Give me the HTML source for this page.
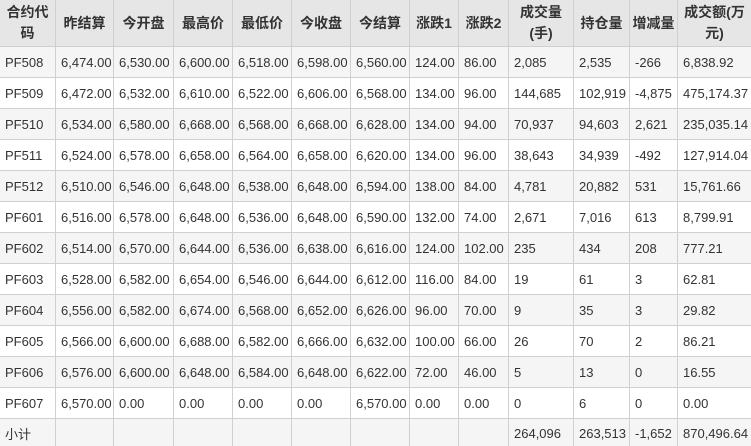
<!DOCTYPE html>
<html><head><meta charset="utf-8"><style>
html,body{margin:0;padding:0;background:#fff;width:751px;height:446px;overflow:hidden}
table{border-collapse:collapse;table-layout:fixed;width:752px;font-family:"Liberation Sans","Noto Sans CJK SC",sans-serif;font-size:13px;color:#333;margin-left:-1px;margin-top:-1px}
td,th{border:1px solid #d0d0d0;padding:0 0 0 5px;white-space:nowrap;overflow:hidden;box-sizing:border-box}
th{background:#e6e6e6;font-weight:bold;font-size:14px;height:47px;line-height:21px;text-align:center;white-space:normal;padding:0 2px}
td{height:31px}
tr:nth-child(even) td{background:#f5f5f5}
tr.last td{height:29px;background:#f5f5f5}
</style></head><body>
<table>
<colgroup><col style="width:56px"><col style="width:58px"><col style="width:60px"><col style="width:59px"><col style="width:59px"><col style="width:59px"><col style="width:59px"><col style="width:49px"><col style="width:50px"><col style="width:65px"><col style="width:56px"><col style="width:48px"><col style="width:74px"></colgroup>
<tr><th>合约代码</th><th>昨结算</th><th>今开盘</th><th>最高价</th><th>最低价</th><th>今收盘</th><th>今结算</th><th>涨跌1</th><th>涨跌2</th><th>成交量(手)</th><th>持仓量</th><th>增减量</th><th>成交额(万元)</th></tr>
<tr><td>PF508</td><td>6,474.00</td><td>6,530.00</td><td>6,600.00</td><td>6,518.00</td><td>6,598.00</td><td>6,560.00</td><td>124.00</td><td>86.00</td><td>2,085</td><td>2,535</td><td>-266</td><td>6,838.92</td></tr>
<tr><td>PF509</td><td>6,472.00</td><td>6,532.00</td><td>6,610.00</td><td>6,522.00</td><td>6,606.00</td><td>6,568.00</td><td>134.00</td><td>96.00</td><td>144,685</td><td>102,919</td><td>-4,875</td><td>475,174.37</td></tr>
<tr><td>PF510</td><td>6,534.00</td><td>6,580.00</td><td>6,668.00</td><td>6,568.00</td><td>6,668.00</td><td>6,628.00</td><td>134.00</td><td>94.00</td><td>70,937</td><td>94,603</td><td>2,621</td><td>235,035.14</td></tr>
<tr><td>PF511</td><td>6,524.00</td><td>6,578.00</td><td>6,658.00</td><td>6,564.00</td><td>6,658.00</td><td>6,620.00</td><td>134.00</td><td>96.00</td><td>38,643</td><td>34,939</td><td>-492</td><td>127,914.04</td></tr>
<tr><td>PF512</td><td>6,510.00</td><td>6,546.00</td><td>6,648.00</td><td>6,538.00</td><td>6,648.00</td><td>6,594.00</td><td>138.00</td><td>84.00</td><td>4,781</td><td>20,882</td><td>531</td><td>15,761.66</td></tr>
<tr><td>PF601</td><td>6,516.00</td><td>6,578.00</td><td>6,648.00</td><td>6,536.00</td><td>6,648.00</td><td>6,590.00</td><td>132.00</td><td>74.00</td><td>2,671</td><td>7,016</td><td>613</td><td>8,799.91</td></tr>
<tr><td>PF602</td><td>6,514.00</td><td>6,570.00</td><td>6,644.00</td><td>6,536.00</td><td>6,638.00</td><td>6,616.00</td><td>124.00</td><td>102.00</td><td>235</td><td>434</td><td>208</td><td>777.21</td></tr>
<tr><td>PF603</td><td>6,528.00</td><td>6,582.00</td><td>6,654.00</td><td>6,546.00</td><td>6,644.00</td><td>6,612.00</td><td>116.00</td><td>84.00</td><td>19</td><td>61</td><td>3</td><td>62.81</td></tr>
<tr><td>PF604</td><td>6,556.00</td><td>6,582.00</td><td>6,674.00</td><td>6,568.00</td><td>6,652.00</td><td>6,626.00</td><td>96.00</td><td>70.00</td><td>9</td><td>35</td><td>3</td><td>29.82</td></tr>
<tr><td>PF605</td><td>6,566.00</td><td>6,600.00</td><td>6,688.00</td><td>6,582.00</td><td>6,666.00</td><td>6,632.00</td><td>100.00</td><td>66.00</td><td>26</td><td>70</td><td>2</td><td>86.21</td></tr>
<tr><td>PF606</td><td>6,576.00</td><td>6,600.00</td><td>6,648.00</td><td>6,584.00</td><td>6,648.00</td><td>6,622.00</td><td>72.00</td><td>46.00</td><td>5</td><td>13</td><td>0</td><td>16.55</td></tr>
<tr><td>PF607</td><td>6,570.00</td><td>0.00</td><td>0.00</td><td>0.00</td><td>0.00</td><td>6,570.00</td><td>0.00</td><td>0.00</td><td>0</td><td>6</td><td>0</td><td>0.00</td></tr>
<tr class="last"><td>小计</td><td></td><td></td><td></td><td></td><td></td><td></td><td></td><td></td><td>264,096</td><td>263,513</td><td>-1,652</td><td>870,496.64</td></tr>
</table>
</body></html>
